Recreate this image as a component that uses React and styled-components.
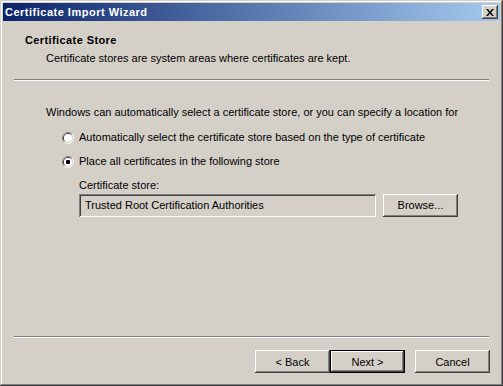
import React from 'react';
import styled, { createGlobalStyle } from 'styled-components';

const GlobalStyle = createGlobalStyle`
  html, body {
    margin: 0;
    padding: 0;
    background: #d4d0c8;
  }
  body {
    font-family: "Liberation Sans", Arial, sans-serif;
    font-size: 11px;
    color: #000;
  }
`;

const raised = `
  box-shadow: inset -1px -1px #404040, inset 1px 1px #ffffff,
    inset -2px -2px #808080, inset 2px 2px #d4d0c8;
`;

const Window = styled.div`
  width: 503px;
  height: 386px;
  box-sizing: border-box;
  padding: 3px;
  background: #d4d0c8;
  box-shadow: inset -1px -1px #404040, inset 1px 1px #d4d0c8,
    inset -2px -2px #808080, inset 2px 2px #ffffff;
  display: flex;
  flex-direction: column;
`;

const TitleBar = styled.div`
  height: 18px;
  flex-shrink: 0;
  display: flex;
  align-items: center;
  justify-content: space-between;
  padding: 0 2px 0 2px;
  background: linear-gradient(to right, #0a246a, #a6caf0);
  color: #fff;
  font-weight: bold;
  font-size: 11px;
  letter-spacing: 0.5px;
`;

const CloseButton = styled.div`
  width: 16px;
  height: 14px;
  background: #d4d0c8;
  ${raised}
  display: flex;
  align-items: center;
  justify-content: center;
`;

const Client = styled.div`
  flex: 1;
  display: flex;
  flex-direction: column;
`;

const Header = styled.div`
  padding: 13px 0 0 22px;
  line-height: 13px;
`;

const HeaderTitle = styled.div`
  font-weight: bold;
  letter-spacing: 0.4px;
`;

const HeaderSub = styled.div`
  margin: 5px 0 0 21px;
`;

const Separator = styled.div`
  height: 1px;
  margin: ${p => p.$top || 0}px 11px 0 11px;
  background: #808080;
  border-bottom: 1px solid #ffffff;
  flex-shrink: 0;
`;

const Body = styled.div`
  flex: 1;
  padding: 25px 0 0 43px;
  line-height: 13px;
`;

const Options = styled.div`
  margin: 12px 0 0 16px;
  display: flex;
  flex-direction: column;
  gap: 11px;
`;

const OptionRow = styled.div`
  display: flex;
  align-items: center;
  gap: 5px;
  height: 13px;
`;

const StoreBlock = styled.div`
  margin: 11px 0 0 33px;
`;

const StoreRow = styled.div`
  margin-top: 2px;
  display: flex;
  gap: 7px;
`;

const StoreField = styled.div`
  width: 297px;
  height: 23px;
  box-sizing: border-box;
  padding: 0 0 1px 6px;
  display: flex;
  align-items: center;
  background: #d4d0c8;
  box-shadow: inset 1px 1px #808080, inset -1px -1px #ffffff,
    inset 2px 2px #404040, inset -2px -2px #d4d0c8;
`;

const Button = styled.div`
  width: 75px;
  height: 23px;
  box-sizing: border-box;
  display: flex;
  align-items: center;
  justify-content: center;
  background: #d4d0c8;
  ${p =>
    p.$default
      ? `box-shadow: inset 0 0 0 1px #000000, inset -2px -2px #404040, inset 2px 2px #ffffff, inset -3px -3px #808080;`
      : raised}
`;

const Footer = styled.div`
  display: flex;
  flex-direction: column;
  flex-shrink: 0;
`;

const ButtonRow = styled.div`
  display: flex;
  justify-content: flex-end;
  padding: 12px 10px 10px 0;
`;

const Gap = styled.div`
  width: 10px;
`;

const Radio = ({ checked }) => (
  <svg width="12" height="12" viewBox="0 0 12 12">
    <path d="M2.11 9.89 A5.5 5.5 0 0 1 9.89 2.11" fill="none" stroke="#808080" />
    <path d="M9.89 2.11 A5.5 5.5 0 0 1 2.11 9.89" fill="none" stroke="#ffffff" />
    <path d="M2.82 9.18 A4.5 4.5 0 0 1 9.18 2.82" fill="none" stroke="#404040" />
    <path d="M9.18 2.82 A4.5 4.5 0 0 1 2.82 9.18" fill="none" stroke="#d4d0c8" />
    <circle cx="6" cy="6" r="4" fill="#ffffff" />
    {checked && <rect x="4" y="4" width="4" height="4" rx="1.2" fill="#000" />}
  </svg>
);

const CloseGlyph = () => (
  <svg width="8" height="7" viewBox="0 0 8 7">
    <path d="M0 0h2l2 2.5L6 0h2L5 3.5 8 7H6L4 4.5 2 7H0l3-3.5z" fill="#000" />
  </svg>
);

export default function App() {
  return (
    <>
      <GlobalStyle />
      <Window>
        <TitleBar>
          <span>Certificate Import Wizard</span>
          <CloseButton>
            <CloseGlyph />
          </CloseButton>
        </TitleBar>
        <Client>
          <Header>
            <HeaderTitle>Certificate Store</HeaderTitle>
            <HeaderSub>Certificate stores are system areas where certificates are kept.</HeaderSub>
          </Header>
          <Separator $top={14} />
          <Body>
            <div>Windows can automatically select a certificate store, or you can specify a location for</div>
            <Options>
              <OptionRow>
                <Radio />
                <span>Automatically select the certificate store based on the type of certificate</span>
              </OptionRow>
              <OptionRow>
                <Radio checked />
                <span>Place all certificates in the following store</span>
              </OptionRow>
            </Options>
            <StoreBlock>
              <div>Certificate store:</div>
              <StoreRow>
                <StoreField>Trusted Root Certification Authorities</StoreField>
                <Button>Browse...</Button>
              </StoreRow>
            </StoreBlock>
          </Body>
          <Footer>
            <Separator />
            <ButtonRow>
              <Button>&lt; Back</Button>
              <Button $default>Next &gt;</Button>
              <Gap />
              <Button>Cancel</Button>
            </ButtonRow>
          </Footer>
        </Client>
      </Window>
    </>
  );
}
